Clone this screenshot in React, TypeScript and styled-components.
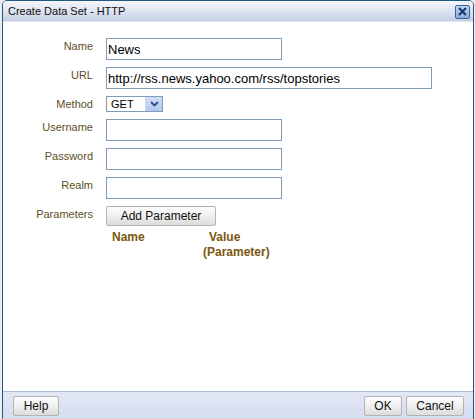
import React from 'react';
import styled, { createGlobalStyle } from 'styled-components';

const GlobalStyle = createGlobalStyle`
	html, body {
		margin: 0;
		padding: 0;
		background: #eceef1;
	}
	body {
		font-family: 'Liberation Sans', Arial, sans-serif;
	}
`;

const Page = styled.div`
	width: 475px;
	height: 419px;
	padding-left: 2px;
	box-sizing: border-box;
	overflow: hidden;
`;

const Dialog = styled.div`
	width: 472px;
	height: 425px;
	box-sizing: border-box;
	border: 1px solid #1d5a80;
	border-radius: 5px 5px 0 0;
	background: #ffffff;
	display: flex;
	flex-direction: column;
	overflow: hidden;
`;

const TitleBar = styled.div`
	height: 20px;
	flex: none;
	display: flex;
	align-items: center;
	justify-content: space-between;
	padding: 0 3px 0 5px;
	background: linear-gradient(#f4f6fb 0%, #e3e8f3 40%, #c6cfe6 100%);
	border-bottom: 1px solid #dfe5f1;
`;

const Title = styled.span`
	font-size: 11px;
	color: #101010;
`;

const CloseButton = styled.button`
	width: 15px;
	height: 14px;
	padding: 0;
	margin-top: 1px;
	border: 1px solid #38609a;
	border-radius: 2px;
	background: linear-gradient(#c6d6f2, #8eaadb);
	display: flex;
	align-items: center;
	justify-content: center;
`;

const Body = styled.div`
	flex: 1;
	padding: 16px 0 0 0;
	display: flex;
	flex-direction: column;
`;

const Form = styled.div`
	display: grid;
	grid-template-columns: 90px auto;
	column-gap: 13px;
	row-gap: 7px;
	align-items: start;
`;

const Label = styled.label`
	text-align: right;
	font-size: 11px;
	line-height: 13px;
	padding-top: 2px;
	color: #5e4f1e;
`;

const TextInput = styled.input<{ $width: number }>`
	width: ${(p) => p.$width}px;
	height: 22px;
	box-sizing: border-box;
	border: 1px solid #7f9db9;
	padding: 0 1px;
	font-family: 'Liberation Sans', Arial, sans-serif;
	font-size: 13px;
	color: #000;
	outline: none;
	background: #fff;
`;

const SelectBox = styled.div`
	width: 57px;
	height: 16px;
	box-sizing: border-box;
	border: 1px solid #7f9db9;
	display: flex;
	align-items: stretch;
	background: #fff;
`;

const SelectValue = styled.span`
	flex: 1;
	font-size: 11px;
	line-height: 14px;
	padding-left: 4px;
	color: #000;
`;

const SelectArrow = styled.span`
	width: 16px;
	background: linear-gradient(#d2def5, #b3c7ec);
	border-left: 1px solid #c9d6ee;
	display: flex;
	align-items: center;
	justify-content: center;
`;

const Button = styled.button<{ $width: number }>`
	width: ${(p) => p.$width}px;
	height: 20px;
	box-sizing: border-box;
	padding: 0;
	border: 1px solid #b3b3b3;
	border-radius: 2px;
	background: linear-gradient(#fdfdfd 0%, #f1f1f1 45%, #dcdcdc 100%);
	font-family: 'Liberation Sans', Arial, sans-serif;
	font-size: 12px;
	color: #111;
`;

const ParamHeaders = styled.div`
	display: flex;
	padding: 4px 0 0 109px;
`;

const ParamHeader = styled.div<{ $width: number }>`
	width: ${(p) => p.$width}px;
	font-size: 12px;
	font-weight: bold;
	line-height: 15px;
	color: #7a5710;
`;

const HeaderLine = styled.div<{ $indent?: number }>`
	padding-left: ${(p) => p.$indent || 0}px;
`;

const Footer = styled.div`
	height: 33px;
	flex: none;
	box-sizing: border-box;
	border-top: 1px solid #aab9d8;
	background: linear-gradient(#e3e8f5, #d3daee);
	display: flex;
	align-items: flex-start;
	padding: 4px 9px 0 10px;
	gap: 4px;
`;

const Spacer = styled.div`
	flex: 1;
`;

function ChevronDown(): JSX.Element {
	return (
		<svg width="9" height="6" viewBox="0 0 9 6">
			<path d="M1 1 L4.5 4.5 L8 1" fill="none" stroke="#2b4c8c" strokeWidth="1.8" />
		</svg>
	);
}

function CloseIcon(): JSX.Element {
	return (
		<svg width="9" height="9" viewBox="0 0 9 9">
			<path d="M1 1 L8 8 M8 1 L1 8" stroke="#1d3b72" strokeWidth="2.2" />
		</svg>
	);
}

export default function App(): JSX.Element {
	return (
		<Page>
			<GlobalStyle />
			<Dialog>
				<TitleBar>
					<Title>Create Data Set - HTTP</Title>
					<CloseButton aria-label="Close">
						<CloseIcon />
					</CloseButton>
				</TitleBar>
				<Body>
					<Form>
						<Label>Name</Label>
						<TextInput $width={176} defaultValue="News" />
						<Label>URL</Label>
						<TextInput $width={326} defaultValue="http://rss.news.yahoo.com/rss/topstories" />
						<Label>Method</Label>
						<SelectBox>
							<SelectValue>GET</SelectValue>
							<SelectArrow>
								<ChevronDown />
							</SelectArrow>
						</SelectBox>
						<Label>Username</Label>
						<TextInput $width={176} />
						<Label>Password</Label>
						<TextInput $width={176} type="password" />
						<Label>Realm</Label>
						<TextInput $width={176} />
						<Label>Parameters</Label>
						<Button $width={110}>Add Parameter</Button>
					</Form>
					<ParamHeaders>
						<ParamHeader $width={91}>Name</ParamHeader>
						<ParamHeader $width={80}>
							<HeaderLine $indent={6}>Value</HeaderLine>
							<HeaderLine>(Parameter)</HeaderLine>
						</ParamHeader>
					</ParamHeaders>
				</Body>
				<Footer>
					<Button $width={46}>Help</Button>
					<Spacer />
					<Button $width={38}>OK</Button>
					<Button $width={58}>Cancel</Button>
				</Footer>
			</Dialog>
		</Page>
	);
}
